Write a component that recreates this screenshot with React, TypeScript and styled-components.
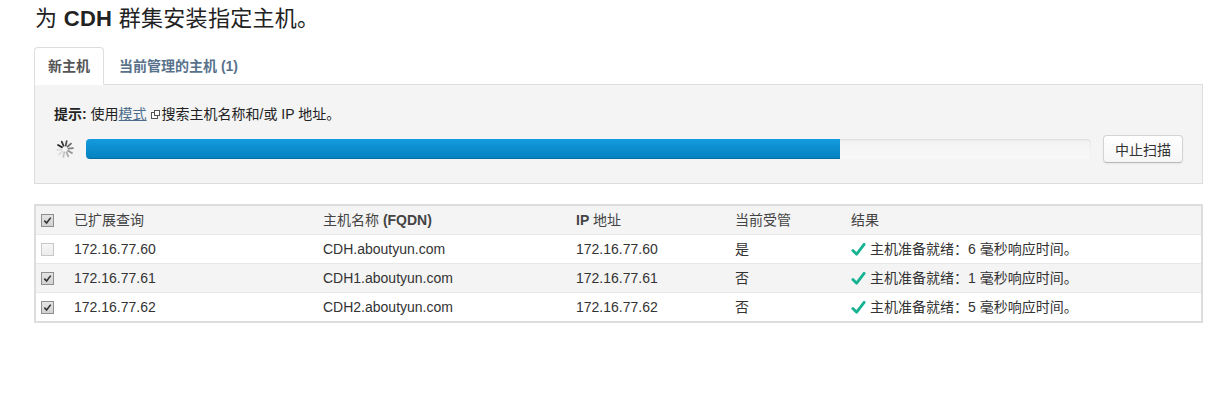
import * as React from 'react';
import styled, { createGlobalStyle } from 'styled-components';

const GlobalStyle = createGlobalStyle`
	body {
		margin: 0;
		background: #fff;
		font-family: 'Liberation Sans', Arial, 'Noto Sans CJK SC', sans-serif;
		font-size: 14px;
		color: #333;
	}
`;

const Page = styled.div`
	padding: 6px 13px 0 34px;
`;

const Title = styled.h1`
	margin: 0 0 16px 1px;
	font-size: 22px;
	line-height: 25px;
	font-weight: normal;
	color: #222;
	letter-spacing: 0.3px;

	b {
		font-weight: bold;
	}
`;

const Tabs = styled.ul`
	list-style: none;
	margin: 0;
	padding: 0;
	display: flex;
	gap: 1px;
	position: relative;
	z-index: 1;
	margin-bottom: -1px;
`;

const Tab = styled.li<{ $active?: boolean }>`
	padding: 8px 13px 8px;
	line-height: 20px;
	font-weight: bold;
	border: 1px solid ${(p) => (p.$active ? '#ddd' : 'transparent')};
	border-bottom-color: ${(p) => (p.$active ? '#fff' : 'transparent')};
	border-radius: 4px 4px 0 0;
	background: ${(p) => (p.$active ? '#fff' : 'transparent')};
	color: ${(p) => (p.$active ? '#555' : '#58728c')};
	cursor: pointer;
`;

const Panel = styled.div`
	border: 1px solid #ddd;
	background: #f4f4f4;
	padding: 19px 19px 20px 19px;
	display: flex;
	flex-direction: column;
	gap: 11px;
`;

const Hint = styled.div`
	line-height: 20px;
	color: #222;
	display: flex;
	align-items: center;

	b {
		font-weight: bold;
	}
`;

const HintLink = styled.a`
	color: #4d6d8c;
	text-decoration: underline;
`;

const ExtIcon = styled.svg`
	width: 9px;
	height: 9px;
	margin: 0 2px 0 4px;
`;

const ScanRow = styled.div`
	display: flex;
	align-items: center;
	gap: 12px;
	height: 28px;
`;

const Spinner = styled.svg`
	width: 18px;
	height: 18px;
	margin-left: 2px;
	flex: none;
`;

const Track = styled.div`
	flex: 1;
	height: 20px;
	border-radius: 4px;
	overflow: hidden;
	background: linear-gradient(#f2f2f2, #f9f9f9);
	box-shadow: inset 0 1px 2px rgba(0, 0, 0, 0.1);
`;

const Fill = styled.div`
	height: 100%;
	background: linear-gradient(#149bdf, #0480be);
	box-shadow: inset 0 -1px 0 rgba(0, 0, 0, 0.15);
`;

const Button = styled.button`
	flex: none;
	width: 80px;
	height: 28px;
	padding: 0;
	font: inherit;
	color: #333;
	background: linear-gradient(#fff, #f6f6f6);
	border: 1px solid #d4d4d4;
	border-bottom-color: #b8b8b8;
	border-radius: 4px;
	box-shadow: inset 0 1px 0 rgba(255, 255, 255, 0.2), 0 1px 2px rgba(0, 0, 0, 0.05);
	cursor: pointer;
`;

const Table = styled.div`
	margin-top: 20px;
	border: 2px solid #ddd;
	border-top-width: 1px;
`;

const cols = '38px 249px 253px 159px 116px 1fr';

const Row = styled.div<{ $shade?: boolean; $head?: boolean }>`
	display: grid;
	grid-template-columns: ${cols};
	align-items: center;
	height: 28px;
	background: ${(p) => (p.$shade ? '#f4f4f4' : '#fff')};
	border-top: 1px solid ${(p) => (p.$head ? '#ddd' : '#e8e8e8')};
	color: ${(p) => (p.$head ? '#444' : '#333')};

	b {
		font-weight: bold;
	}
`;

const Cell = styled.div`
	white-space: nowrap;
	line-height: 20px;
	display: flex;
	align-items: center;
`;

const BoxCell = styled.div`
	padding-left: 5px;
	display: flex;
	align-items: center;
`;

const Box = styled.span<{ $checked?: boolean }>`
	width: 11px;
	height: 11px;
	border: 1px solid ${(p) => (p.$checked ? '#8f8f8f' : '#c8c8c8')};
	background: ${(p) => (p.$checked ? 'linear-gradient(#e4e4e4, #d2d2d2)' : 'linear-gradient(#f6f6f6, #ececec)')};
	display: flex;
	align-items: center;
	justify-content: center;

	svg {
		width: 9px;
		height: 9px;
	}
`;

const Ok = styled.svg`
	width: 15px;
	height: 15px;
	margin-right: 4px;
	flex: none;
`;

const Checkbox = ({ checked }: { checked?: boolean }) => (
	<Box $checked={checked}>
		{checked && (
			<svg viewBox="0 0 10 10">
				<path d="M1.5 5.2 L4 7.8 L8.6 1.8" fill="none" stroke="#333" strokeWidth="1.8" />
			</svg>
		)}
	</Box>
);

const SpinnerIcon = () => {
	const lines = Array.from({ length: 10 }, (_, i) => i);
	return (
		<Spinner viewBox="0 0 18 18">
			{lines.map((i) => {
				const a = (i * 36 - 150) * (Math.PI / 180);
				const x1 = 9 + Math.cos(a) * 3.5;
				const y1 = 9 + Math.sin(a) * 3.5;
				const x2 = 9 + Math.cos(a) * 8;
				const y2 = 9 + Math.sin(a) * 8;
				return (
					<line
						key={i}
						x1={x1}
						y1={y1}
						x2={x2}
						y2={y2}
						stroke="#222"
						strokeWidth="1.8"
						strokeLinecap="round"
						opacity={Math.max(0.12, 1 - i * 0.11)}
					/>
				);
			})}
		</Spinner>
	);
};

const hosts = [
	{ ip: '172.16.77.60', name: 'CDH.aboutyun.com', managed: '是', ms: 6, checked: false },
	{ ip: '172.16.77.61', name: 'CDH1.aboutyun.com', managed: '否', ms: 1, checked: true },
	{ ip: '172.16.77.62', name: 'CDH2.aboutyun.com', managed: '否', ms: 5, checked: true },
];

const progress = 75;

const App: React.FC = () => {
	return (
		<Page>
			<GlobalStyle />
			<Title>
				为 <b>CDH</b> 群集安装指定主机。
			</Title>
			<Tabs>
				<Tab $active>新主机</Tab>
				<Tab>当前管理的主机 (1)</Tab>
			</Tabs>
			<Panel>
				<Hint>
					<b>提示:</b>&nbsp;使用<HintLink href="#">模式</HintLink>
					<ExtIcon viewBox="0 0 9 9">
						<rect x="0.5" y="2.5" width="6" height="6" fill="#fff" stroke="#555" />
						<rect x="3" y="0" width="6" height="6" fill="#555" />
						<rect x="4" y="1" width="4" height="4" fill="#fff" />
					</ExtIcon>
					搜索主机名称和/或 IP 地址。
				</Hint>
				<ScanRow>
					<SpinnerIcon />
					<Track>
						<Fill style={{ width: `${progress}%` }} />
					</Track>
					<Button>中止扫描</Button>
				</ScanRow>
			</Panel>
			<Table>
				<Row $head $shade>
					<BoxCell>
						<Checkbox checked />
					</BoxCell>
					<Cell>已扩展查询</Cell>
					<Cell>
						主机名称&nbsp;<b>(FQDN)</b>
					</Cell>
					<Cell>
						<b>IP</b>&nbsp;地址
					</Cell>
					<Cell>当前受管</Cell>
					<Cell>结果</Cell>
				</Row>
				{hosts.map((h, i) => (
					<Row key={h.ip} $shade={i === 1}>
						<BoxCell>
							<Checkbox checked={h.checked} />
						</BoxCell>
						<Cell>{h.ip}</Cell>
						<Cell>{h.name}</Cell>
						<Cell>{h.ip}</Cell>
						<Cell>{h.managed}</Cell>
						<Cell>
							<Ok viewBox="0 0 16 16">
								<path d="M2 9 L6 13 L14 2.5" fill="none" stroke="#16b393" strokeWidth="3" strokeLinecap="round" strokeLinejoin="round" />
							</Ok>
							主机准备就绪：{h.ms} 毫秒响应时间。
						</Cell>
					</Row>
				))}
			</Table>
		</Page>
	);
};

export default App;
